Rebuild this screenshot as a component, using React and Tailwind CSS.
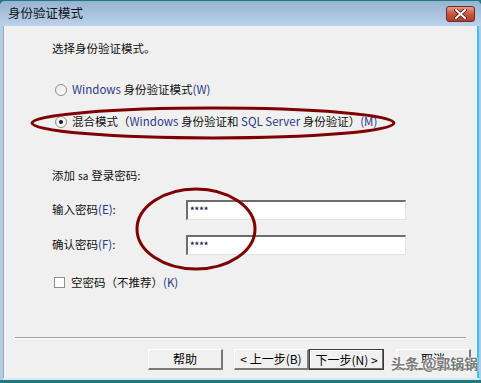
import React from "react";

const FONT = { fontFamily: '"Noto Sans CJK SC", "Microsoft YaHei", sans-serif' };

function Radio({ checked }) {
  return (
    <span className="flex h-[12px] w-[12px] items-center justify-center rounded-full border border-[#8e8f8f] bg-gradient-to-br from-[#e6e6e6] to-[#ffffff]">
      {checked && <span className="h-[4px] w-[4px] rounded-full bg-[#1a1a1a]" />}
    </span>
  );
}

function Field({ label, accent }) {
  return (
    <div className="flex h-[20px] items-center">
      <span className="w-[134px] text-[11.5px] text-[#111]">
        {label}
        <span className="text-[#2b3a8a]">{accent}</span>:
      </span>
      <div className="flex h-[20px] w-[220px] items-center border-t-2 border-l-2 border-t-[#6d6d6d] border-l-[#6d6d6d] border-r border-b border-r-[#e3e3e3] border-b-[#e3e3e3] bg-white pl-[2px] text-[9px] font-bold leading-none text-[#1a1a4a]">
        ****
      </div>
    </div>
  );
}

function Button({ children, focused }) {
  return (
    <button
      type="button"
      className={
        "flex h-[21px] w-[75px] items-center justify-center bg-[#f0f0f0] text-[12px] text-black " +
        (focused
          ? "border border-[#3a3a3a] shadow-[inset_-1px_-1px_0_#6b6b6b,inset_1px_1px_0_#ffffff]"
          : "border-t border-l border-t-white border-l-white border-r-2 border-b-2 border-r-[#7a7a7a] border-b-[#7a7a7a]")
      }
    >
      {children}
    </button>
  );
}

export default function App() {
  return (
    <div style={FONT} className="relative h-[383px] w-[481px] overflow-hidden bg-[#1f7a80]">
      <div className="absolute inset-x-0 top-[1px] bottom-[3px] flex flex-col rounded-t-[5px] bg-[#b4cbe4]">
        {/* title bar */}
        <div className="flex h-[25px] items-center justify-between rounded-t-[5px] bg-gradient-to-b from-[#98b2d2] to-[#bad2ea] pl-[8px] pr-[6px]">
          <span className="text-[12.5px] text-[#111]">身份验证模式</span>
          <span className="flex h-[16px] w-[29px] items-center justify-center rounded-[3px] border border-[#6b2a22] bg-gradient-to-b from-[#e39a88] via-[#c8563f] to-[#b13d28]">
            <svg width="13" height="10" viewBox="0 0 13 10">
              <path d="M2 1 L11 9 M11 1 L2 9" stroke="#5a1a10" strokeWidth="3.6" strokeLinecap="square" />
              <path d="M2 1 L11 9 M11 1 L2 9" stroke="#ffffff" strokeWidth="2" strokeLinecap="square" />
            </svg>
          </span>
        </div>

        {/* body */}
        <div className="ml-[3px] mr-[2px] flex flex-1 flex-col border-l border-[#9aa9bb] border-r-2 border-r-[#2ec5ee] bg-[#f0f0f0] text-[11.5px] text-[#111]">
          <div className="mt-[14px] flex h-[17px] items-center pl-[48px]">选择身份验证模式。</div>

          <div className="mt-[24px] flex h-[17px] items-center gap-[5px] pl-[51px]">
            <Radio />
            <span>
              <span className="text-[#2b3a8a]">Windows</span> 身份验证模式<span className="text-[#2b3a8a]">(W)</span>
            </span>
          </div>

          <div className="mt-[15px] flex h-[17px] items-center gap-[5px] pl-[51px]">
            <Radio checked />
            <span>
              混合模式（<span className="text-[#2b3a8a]">Windows</span> 身份验证和{" "}
              <span className="text-[#2b3a8a]">SQL Server</span> 身份验证）<span className="text-[#2b3a8a]">(M)</span>
            </span>
          </div>

          <div className="mt-[37px] flex h-[17px] items-center pl-[48px]">
            添加 <span className="mx-[3px] text-[10px]">sa</span> 登录密码:
          </div>

          <div className="mt-[16px] pl-[48px]">
            <Field label="输入密码" accent="(E)" />
          </div>
          <div className="mt-[15px] pl-[48px]">
            <Field label="确认密码" accent="(F)" />
          </div>

          <div className="mt-[19px] flex h-[17px] items-center gap-[6px] pl-[50px]">
            <span className="h-[11px] w-[11px] border border-[#8e8f8f] bg-white" />
            <span>
              空密码（不推荐）<span className="text-[#2b3a8a]">(K)</span>
            </span>
          </div>

          <div className="mx-[11px] mt-[46px] h-[2px] border-t border-t-[#a0a0a0] border-b border-b-white" />

          <div className="mt-[10px] flex items-center pl-[144px]">
            <Button>帮助</Button>
            <div className="ml-[11px] flex">
              <Button>&lt; 上一步(B)</Button>
              <Button focused>下一步(N) &gt;</Button>
            </div>
            <div className="ml-[12px]">
              <Button>取消</Button>
            </div>
          </div>
        </div>
        <div className="ml-[3px] mr-[2px] h-[2px] bg-[#d8e8f4]" />
      </div>

      {/* hand-drawn annotations */}
      <svg className="pointer-events-none absolute inset-0" width="481" height="383">
        <ellipse cx="213" cy="123" rx="181" ry="15" fill="none" stroke="#800000" strokeWidth="3" />
        <ellipse cx="196" cy="229" rx="59" ry="40" fill="none" stroke="#800000" strokeWidth="3" />
      </svg>

      {/* watermark */}
      <div
        className="pointer-events-none absolute left-[391px] top-[353px] text-[14px] font-bold text-[#7a7a7a]"
        style={{ textShadow: "0 0 2px #fff, 0 0 2px #fff" }}
      >
        头条 @郭锅锅
      </div>
    </div>
  );
}
